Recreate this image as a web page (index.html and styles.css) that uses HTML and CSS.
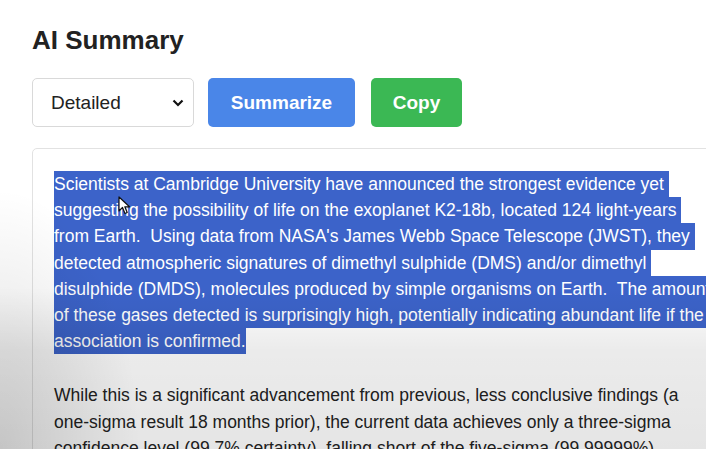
FILE: index.html
```html
<!DOCTYPE html>
<html>
<head>
<meta charset="utf-8">
<link rel="stylesheet" href="styles.css">
</head>
<body>
<div class="page">
  <h1 class="title">AI Summary</h1>
  <div class="controls">
    <div class="select">
      <span>Detailed</span>
      <svg class="chev" width="12" height="8" viewBox="0 0 12 8"><path d="M1.5 1.5 L6 6 L10.5 1.5" fill="none" stroke="#111" stroke-width="2.2"/></svg>
    </div>
    <button class="btn btn-blue">Summarize</button>
    <button class="btn btn-green">Copy</button>
  </div>
  <div class="output">
    <div class="para sel">
      <span class="line">Scientists at Cambridge University have announced the strongest evidence yet </span>
      <span class="line">suggesting the possibility of life on the exoplanet K2-18b, located 124 light-years </span>
      <span class="line">from Earth.  Using data from NASA's James Webb Space Telescope (JWST), they </span>
      <span class="line">detected atmospheric signatures of dimethyl sulphide (DMS) and/or dimethyl </span>
      <span class="line">disulphide (DMDS), molecules produced by simple organisms on Earth.  The amount </span>
      <span class="line">of these gases detected is surprisingly high, potentially indicating abundant life if the </span>
      <span class="line">association is confirmed.</span>
    </div>
    <div class="para">
      <span class="line">While this is a significant advancement from previous, less conclusive findings (a</span>
      <span class="line">one-sigma result 18 months prior), the current data achieves only a three-sigma</span>
      <span class="line">confidence level (99.7% certainty), falling short of the five-sigma (99.99999%)</span>
    </div>
  </div>
</div>
<svg class="cursor" width="14" height="20" viewBox="0 0 14 20"><path d="M1 1 L1 15 L4.5 11.5 L7 17.5 L9.2 16.5 L6.8 10.8 L11.5 10.8 Z" fill="#fff" stroke="#111" stroke-width="1.2" stroke-linejoin="round"/></svg>
<div class="vignette"></div>
</body>
</html>
```

FILE: styles.css
```css
html, body {
  margin: 0;
  padding: 0;
  width: 706px;
  height: 449px;
  overflow: hidden;
  background: #fff;
}
body {
  position: relative;
  font-family: "Liberation Sans", Arial, sans-serif;
  color: #222;
}
.page {
  width: 760px;
  padding: 26px 0 0 32px;
}
.title {
  margin: 0;
  font-size: 26px;
  font-weight: bold;
  line-height: 28px;
  color: #222;
}
.controls {
  display: flex;
  gap: 14px;
  margin-top: 24px;
  height: 49px;
}
.select {
  box-sizing: border-box;
  width: 162px;
  height: 49px;
  border: 1px solid #d9d9d9;
  border-radius: 5px;
  display: flex;
  align-items: center;
  justify-content: space-between;
  padding: 0 9px 0 18px;
  font-size: 19px;
  color: #222;
}
.btn {
  height: 49px;
  border: none;
  border-radius: 5px;
  color: #fff;
  font-family: "Liberation Sans", Arial, sans-serif;
  font-weight: bold;
  font-size: 19px;
  padding: 0;
}
.btn-blue {
  width: 147px;
  background: #4a86e8;
}
.btn-green {
  width: 91px;
  margin-left: 2px;
  background: #3bb854;
}
.output {
  margin-top: 21px;
  border: 1px solid #e2e2e2;
  border-radius: 5px;
  padding: 22px 21px 40px;
  font-size: 17.5px;
  line-height: 26.2px;
  color: #222;
}
.para .line {
  display: block;
  width: fit-content;
  white-space: pre;
}
.sel .line {
  background: #3c63c9;
  color: #fff;
}
.para + .para {
  margin-top: 28px;
}
.cursor {
  position: absolute;
  left: 118px;
  top: 196px;
}
.vignette {
  position: absolute;
  inset: 0;
  pointer-events: none;
  background:
    radial-gradient(ellipse 140px 260px at 0 449px, rgba(0,0,0,0.14), rgba(0,0,0,0) 100%),
    linear-gradient(to bottom, rgba(0,0,0,0) 0, rgba(0,0,0,0) 64%, rgba(0,0,0,0.08) 78%, rgba(0,0,0,0.1) 100%);
}
```
